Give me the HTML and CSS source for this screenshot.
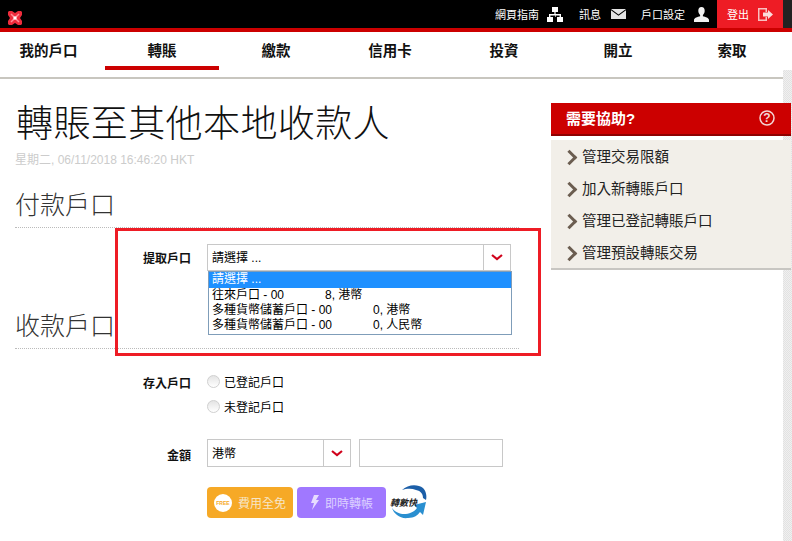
FILE: index.html
```html
<!DOCTYPE html>
<html lang="zh-Hant">
<head>
  <meta charset="UTF-8" />
  <meta name="viewport" content="width=device-width, initial-scale=1.0"/>
  <title>轉賬至其他本地收款人</title>
  <link rel="stylesheet" href="styles.css">
</head>
<body>
  <header class="topbar">
    <svg class="logo" viewBox="0 0 16 16" width="16" height="16" aria-label="logo">
      <path d="M2 1h3l3 2 3-2h3l1 1v3l-2 3 2 3v3l-1 1h-3l-3-2-3 2H2l-1-1v-3l2-3-2-3V2z" fill="#ee2c3c"/>
      <path d="M4 4l8 8M12 4l-8 8" stroke="#ff8f98" stroke-width="1.5"/>
      <rect x="6.5" y="6.5" width="3" height="3" fill="#fff"/>
    </svg>
    <nav class="toplinks">
      <a class="toplink guide">網頁指南
        <svg width="16" height="15" viewBox="0 0 16 15"><path d="M5 0h6v5H8.600v2H14v3h2v5h-6v-5h2.600V8.500H8.600V10H8V8.500H3.400V10H6v5H0v-5h2V7h5.400V5H5z" fill="#fff"/></svg>
      </a>
      <a class="toplink messages">訊息
        <svg width="15" height="10" viewBox="0 0 15 10"><path d="M0 0h15L7.500 5.500z M0 1.200l7.500 5.600 7.500-5.600V10H0z" fill="#e4e4e4"/></svg>
      </a>
      <a class="toplink settings">戶口設定
        <svg width="15" height="15" viewBox="0 0 15 15"><path d="M7.500 0c2.200 0 3.200 1.600 3.200 3.800 0 2-1 3.500-1.800 4.200v1.300c2.600.7 6.100 1.700 6.100 3.700v2H0v-2c0-2 3.500-3 6.100-3.700V8C5.300 7.300 4.300 5.800 4.300 3.800 4.300 1.600 5.300 0 7.500 0z" fill="#f2f2f2"/></svg>
      </a>
      <a class="logout">登出
        <svg width="15" height="13" viewBox="0 0 15 13"><path d="M0 0h9v4H7.500V1.500h-6v10h6V9H9v4H0z" fill="#f8c0c0"/><path d="M5 4.500h5V2l5 4.500L10 11V8.500H5z" fill="#fbdcdc"/></svg>
      </a>
      <span class="topbar-end"></span>
    </nav>
  </header>

  <nav class="mainnav">
    <a class="mainnav-item">我的戶口</a>
    <a class="mainnav-item active">轉賬</a>
    <a class="mainnav-item">繳款</a>
    <a class="mainnav-item">信用卡</a>
    <a class="mainnav-item">投資</a>
    <a class="mainnav-item">開立</a>
    <a class="mainnav-item">索取</a>
  </nav>

  <div class="scrolltrack"></div>

  <div class="page">
    <main class="content">
      <h1>轉賬至其他本地收款人</h1>
      <p class="timestamp">星期二, 06/11/2018 16:46:20 HKT</p>

      <h2 class="section-title first">付款戶口</h2>
      <div class="highlight">
        <div class="form-row">
          <label class="form-label">提取戶口</label>
          <div class="select-wrap">
            <div class="select wide">
              <span class="select-value">請選擇 ...</span>
              <span class="select-arrow"><svg width="12" height="7" viewBox="0 0 12 7"><path d="M1 1l5 4 5-4" fill="none" stroke="#d0021b" stroke-width="2.200"/></svg></span>
            </div>
            <ul class="options">
              <li class="selected">請選擇 ...</li>
              <li>往來戶口 - 00<span class="mask"></span>8, 港幣</li>
              <li>多種貨幣儲蓄戶口 - 00<span class="mask"></span>0, 港幣</li>
              <li>多種貨幣儲蓄戶口 - 00<span class="mask"></span>0, 人民幣</li>
            </ul>
          </div>
        </div>
      </div>
      <h2 class="section-title behind">收款戶口</h2>

      <div class="form-row radio-row">
        <label class="form-label">存入戶口</label>
        <div class="radios">
          <label class="radio"><span class="radio-dot"></span>已登記戶口</label>
          <label class="radio"><span class="radio-dot"></span>未登記戶口</label>
        </div>
      </div>

      <div class="form-row amount-row">
        <label class="form-label">金額</label>
        <div class="select narrow">
          <span class="select-value">港幣</span>
          <span class="select-arrow"><svg width="12" height="7" viewBox="0 0 12 7"><path d="M1 1l5 4 5-4" fill="none" stroke="#d0021b" stroke-width="2.200"/></svg></span>
        </div>
        <div class="amount-input"></div>
      </div>

      <div class="badges">
        <span class="badge badge-free"><span class="free-dot">FREE</span>費用全免</span>
        <span class="badge badge-fast">
          <svg width="9" height="15" viewBox="0 0 9 15"><path d="M4 0h5L6 5h3L2 15l2-7H1z" fill="#e6dcff"/></svg>即時轉帳
        </span>
        <span class="fps">
          <svg width="38" height="36" viewBox="0 0 38 36">
            <path d="M12 6C18 0 28 0 33 4c3 3 4 8 3 12l-3-2c0-4-2-7-7-8-5-2-10-1-14 0z" fill="#1c5fa8"/>
            <path d="M2 24c2 6 8 11 16 10 6 0 10-3 12-6l3 3 3-13-12 3 3 3c-3 4-8 6-13 6-4 0-9-2-12-6z" fill="#2a8fd0"/>
          </svg>
          <span class="fps-text">轉數快</span>
        </span>
      </div>
    </main>

    <aside class="help">
      <div class="help-head">
        <span>需要協助?</span>
        <svg width="16" height="16" viewBox="0 0 16 16"><circle cx="8" cy="8" r="7" fill="none" stroke="#f3d6d6" stroke-width="1.500"/><text x="8" y="12" text-anchor="middle" class="help-q">?</text></svg>
      </div>
      <ul class="help-list">
        <li>管理交易限額</li>
        <li>加入新轉賬戶口</li>
        <li>管理已登記轉賬戶口</li>
        <li>管理預設轉賬交易</li>
      </ul>
    </aside>
  </div>
</body>
</html>
```

FILE: styles.css
```css
* {
  box-sizing: border-box;
}

html, body {
  margin: 0;
  height: 541px;
  overflow: hidden;
}

body {
  font-family: "Liberation Sans", "Noto Sans CJK TC", sans-serif;
  font-size: 13px;
  color: #000;
  background: #fff;
}

.topbar {
  height: 32px;
  background: #000;
  border-bottom: 4px solid #cc0000;
  display: flex;
  justify-content: space-between;
}

.logo {
  margin: 10px 0 0 7px;
}

.toplinks {
  display: flex;
  align-items: center;
}

.toplink {
  display: flex;
  align-items: center;
  color: #fff;
  font-size: 11px;
}

.guide {
  gap: 8px;
  margin-right: 16px;
}

.messages {
  gap: 10px;
  margin-right: 15px;
}

.settings {
  gap: 9px;
  margin-right: 8px;
}

.logout {
  display: flex;
  align-items: center;
  justify-content: center;
  gap: 9px;
  width: 66px;
  height: 28px;
  background: #ee1c25;
  color: #fff;
  font-size: 11px;
}

.topbar-end {
  width: 9px;
  height: 28px;
  background: #222;
}

.mainnav {
  height: 47px;
  margin-right: 9px;
  display: flex;
  border-bottom: 2px solid #c8c6bf;
}

.mainnav-item {
  flex: none;
  width: 114px;
  height: 38px;
  display: flex;
  justify-content: center;
  align-items: center;
  border-bottom: 4px solid transparent;
  font-size: 14.5px;
  font-weight: bold;
  color: #111;
}

.mainnav-item:first-child {
  width: 105px;
  padding-right: 8px;
}

.mainnav-item.active {
  border-bottom-color: #cc0000;
}

.scrolltrack {
  position: absolute;
  top: 70px;
  right: 0;
  bottom: 0;
  width: 9px;
  background: repeating-conic-gradient(#e2e2e2 0 25%, #f0f0f0 0 50%) 0 0 / 2px 2px;
}

.page {
  position: relative;
  display: flex;
  padding-left: 15px;
  height: 462px;
}

.content {
  width: 536px;
}

h1 {
  margin: 20px 0 0 1px;
  font-family: "Noto Sans CJK TC", serif;
  font-size: 37px;
  font-weight: 300;
  letter-spacing: 0.4px;
  line-height: 44px;
  color: #111;
}

.timestamp {
  margin: 10px 0 0;
  font-size: 12px;
  color: #ccc;
  line-height: 14px;
}

.section-title {
  margin: 0;
  width: 504px;
  height: 44px;
  font-family: "Noto Sans CJK TC", serif;
  font-size: 25px;
  font-weight: 300;
  line-height: 39px;
  color: #333;
  border-bottom: 1px dotted #bbb;
}

.section-title.first {
  margin-top: 17px;
}

.section-title.behind {
  margin-top: -51px;
}

.highlight {
  position: relative;
  z-index: 1;
  width: 426px;
  height: 128px;
  margin-left: 100px;
  padding-top: 13px;
  border: 3px solid #ee1c25;
}

.form-row {
  display: flex;
}

.form-label {
  width: 176px;
  padding-top: 5px;
  text-align: right;
  font-weight: bold;
  font-size: 12px;
  color: #111;
}

.highlight .form-label {
  width: 73px;
}

.select-wrap {
  margin-left: 16px;
}

.select {
  display: flex;
  height: 27px;
  background: #fff;
  border: 1px solid #c8c8c8;
}

.select.wide {
  width: 304px;
}

.select.narrow {
  width: 144px;
  height: 28px;
  margin-left: 16px;
}

.select-value {
  flex: 1;
  padding: 5px 4px;
  font-size: 12px;
  line-height: 16px;
}

.narrow .select-value {
  padding-top: 6px;
}

.select-arrow {
  width: 27px;
  display: flex;
  align-items: center;
  justify-content: center;
  border-left: 1px solid #c8c8c8;
}

.options {
  position: relative;
  left: 1px;
  width: 304px;
  margin: 0;
  padding: 0 0 1px;
  list-style: none;
  border: 1px solid #7f9db9;
  background: #fff;
  font-size: 12px;
  line-height: 15px;
}

.options li {
  padding-left: 3px;
  white-space: nowrap;
}

.options .selected {
  line-height: 15px;
  padding-bottom: 1px;
  background: #1e90ff;
  color: #fff;
}

.mask {
  display: inline-block;
  width: 41px;
}

.radio-row {
  margin-top: 20px;
}

.radios {
  margin-left: 16px;
}

.radio {
  display: flex;
  align-items: center;
  gap: 4px;
  height: 25px;
  font-size: 12px;
}

.radio-dot {
  width: 13px;
  height: 13px;
  border-radius: 50%;
  border: 1px solid #d0d0d0;
  background: linear-gradient(#e4e4e4, #fff);
}

.amount-row {
  margin-top: 20px;
}

.amount-row .form-label {
  padding-top: 7px;
}

.amount-input {
  width: 144px;
  height: 28px;
  margin-left: 8px;
  border: 1px solid #c8c8c8;
}

.badges {
  display: flex;
  align-items: flex-start;
  gap: 4px;
  margin: 20px 0 0 192px;
}

.badge {
  display: flex;
  align-items: center;
  justify-content: center;
  height: 31px;
  border-radius: 4px;
  color: #f6e6c8;
  font-size: 12px;
}

.badge-free {
  width: 86px;
  gap: 6px;
  background: #f6a926;
}

.free-dot {
  width: 18px;
  height: 18px;
  border-radius: 50%;
  background: #fff;
  color: #f6a926;
  font-size: 5px;
  font-weight: bold;
  line-height: 18px;
  text-align: center;
}

.badge-fast {
  width: 89px;
  gap: 6px;
  background: #a078ff;
  color: #dcd0ff;
}

.fps {
  position: relative;
  width: 38px;
  height: 36px;
  margin-top: -3px;
}

.fps-text {
  position: absolute;
  left: 0;
  top: 12px;
  font-size: 9px;
  font-style: italic;
  font-weight: bold;
  color: #222;
  white-space: nowrap;
}

.help {
  position: relative;
  z-index: 1;
  width: 240px;
  margin-top: 24px;
  align-self: flex-start;
}

.help-head {
  height: 33px;
  background: #cc0000;
  border-bottom: 2px solid #8e0000;
  display: flex;
  align-items: center;
  justify-content: space-between;
  padding: 0 16px 2px 15px;
  color: #fff;
  font-size: 15px;
  font-weight: bold;
}

.help-q {
  font-family: "Liberation Sans", sans-serif;
  font-size: 12px;
  font-weight: bold;
  fill: #f3d6d6;
}

.help-list {
  margin: 4px 0 0;
  padding: 0;
  list-style: none;
  background: #f2efe9;
  border-bottom: 2px solid #c8c6c2;
}

.help-list li {
  position: relative;
  height: 32px;
  display: flex;
  align-items: center;
  padding: 0 0 2px 31px;
  font-size: 14.5px;
  color: #222;
}

.help-list li::before {
  content: "";
  position: absolute;
  left: 13px;
  top: 12px;
  width: 8px;
  height: 8px;
  border-top: 3px solid #6b5d50;
  border-right: 3px solid #6b5d50;
  transform: rotate(45deg);
}
```
